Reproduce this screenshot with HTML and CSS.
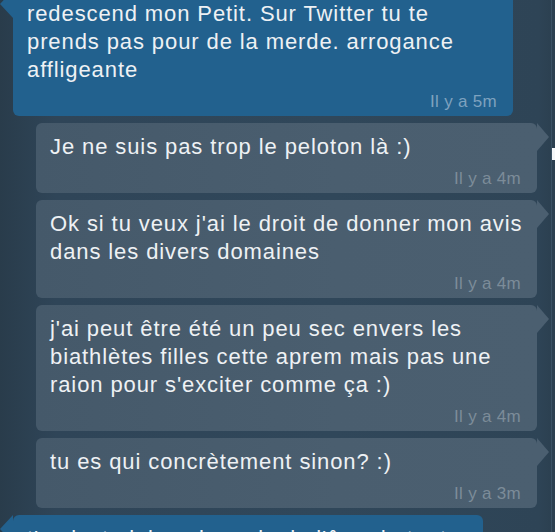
FILE: index.html
```html
<!DOCTYPE html>
<html lang="fr">
<head>
    <meta charset="UTF-8">
    <meta name="viewport" content="width=device-width, initial-scale=1.0">
    <title>Messages</title>
    <link rel="stylesheet" href="styles.css">
</head>
<body>

<div class="screen">
    <div class="chat">
        <div class="msg msg-in">
            <p class="msg-text">redescend mon Petit. Sur Twitter tu te prends pas pour de la merde. arrogance affligeante</p>
            <div class="msg-time">Il y a 5m</div>
        </div>

        <div class="msg msg-out">
            <p class="msg-text">Je ne suis pas trop le peloton là :)</p>
            <div class="msg-time">Il y a 4m</div>
        </div>

        <div class="msg msg-out">
            <p class="msg-text">Ok si tu veux j'ai le droit de donner mon avis dans les divers domaines</p>
            <div class="msg-time">Il y a 4m</div>
        </div>

        <div class="msg msg-out">
            <p class="msg-text">j'ai peut être été un peu sec envers les biathlètes filles cette aprem mais pas une raion pour s'exciter comme ça :)</p>
            <div class="msg-time">Il y a 4m</div>
        </div>

        <div class="msg msg-out">
            <p class="msg-text">tu es qui concrètement sinon? :)</p>
            <div class="msg-time">Il y a 3m</div>
        </div>

        <div class="msg msg-in msg-short">
            <p class="msg-text">t'es juste jaloux je crois de l'âge de tout</p>
            <div class="msg-time">Il y a 2m</div>
        </div>
    </div>
    <div class="scroll-mark"></div>
</div>

</body>
</html>
```

FILE: styles.css
```css
html, body {
    margin: 0;
    padding: 0;
    height: 100%;
    overflow: hidden;
}
body {
    font-family: "Liberation Sans", Arial, sans-serif;
    background: #2e4456;
    color: #eef1f4;
}
.screen {
    position: relative;
    height: 100%;
    overflow: hidden;
    background: linear-gradient(to right, #293c4b 0%, #2f4558 10%, #30475a 60%, #2e4456 97%, #2b3f4f 100%);
}
.screen::after {
    content: "";
    position: absolute;
    top: 0;
    bottom: 0;
    right: 3px;
    width: 1px;
    background: #3a5163;
}
.chat {
    display: flex;
    flex-direction: column;
    gap: 7px;
    margin-top: -10px;
}
.msg {
    position: relative;
    padding: 10px 12px 4px 14px;
    border-radius: 6px;
}
.msg-text {
    margin: 0;
    font-size: 22px;
    letter-spacing: 0.9px;
    line-height: 28px;
}
.msg-time {
    margin: 8px 4px 0 0;
    text-align: right;
    font-size: 17px;
    letter-spacing: 0.3px;
    line-height: 20px;
}
.msg-in {
    margin: 0 42px 0 13px;
    background: #22618e;
}
.msg-in .msg-time {
    color: #7ea2bf;
}
.msg-in::before {
    content: "";
    position: absolute;
    left: -13px;
    top: 0;
    border-style: solid;
    border-width: 14px 13px 14px 0;
    border-color: transparent #22618e transparent transparent;
}
.msg-short {
    margin-right: 72px;
}
.msg-out {
    margin: 0 18px 0 36px;
    background: linear-gradient(to right, #45596a 0%, #4a5e6f 60%, #4b5f70 100%);
}
.msg-out .msg-time {
    color: #7c8c99;
}
.msg-out::after {
    content: "";
    position: absolute;
    right: -12px;
    top: 0;
    border-style: solid;
    border-width: 14px 0 14px 12px;
    border-color: transparent transparent transparent #4b5f70;
}
.scroll-mark {
    position: absolute;
    right: 0;
    top: 148px;
    width: 3px;
    height: 12px;
    background: #f4f6f8;
}
```
